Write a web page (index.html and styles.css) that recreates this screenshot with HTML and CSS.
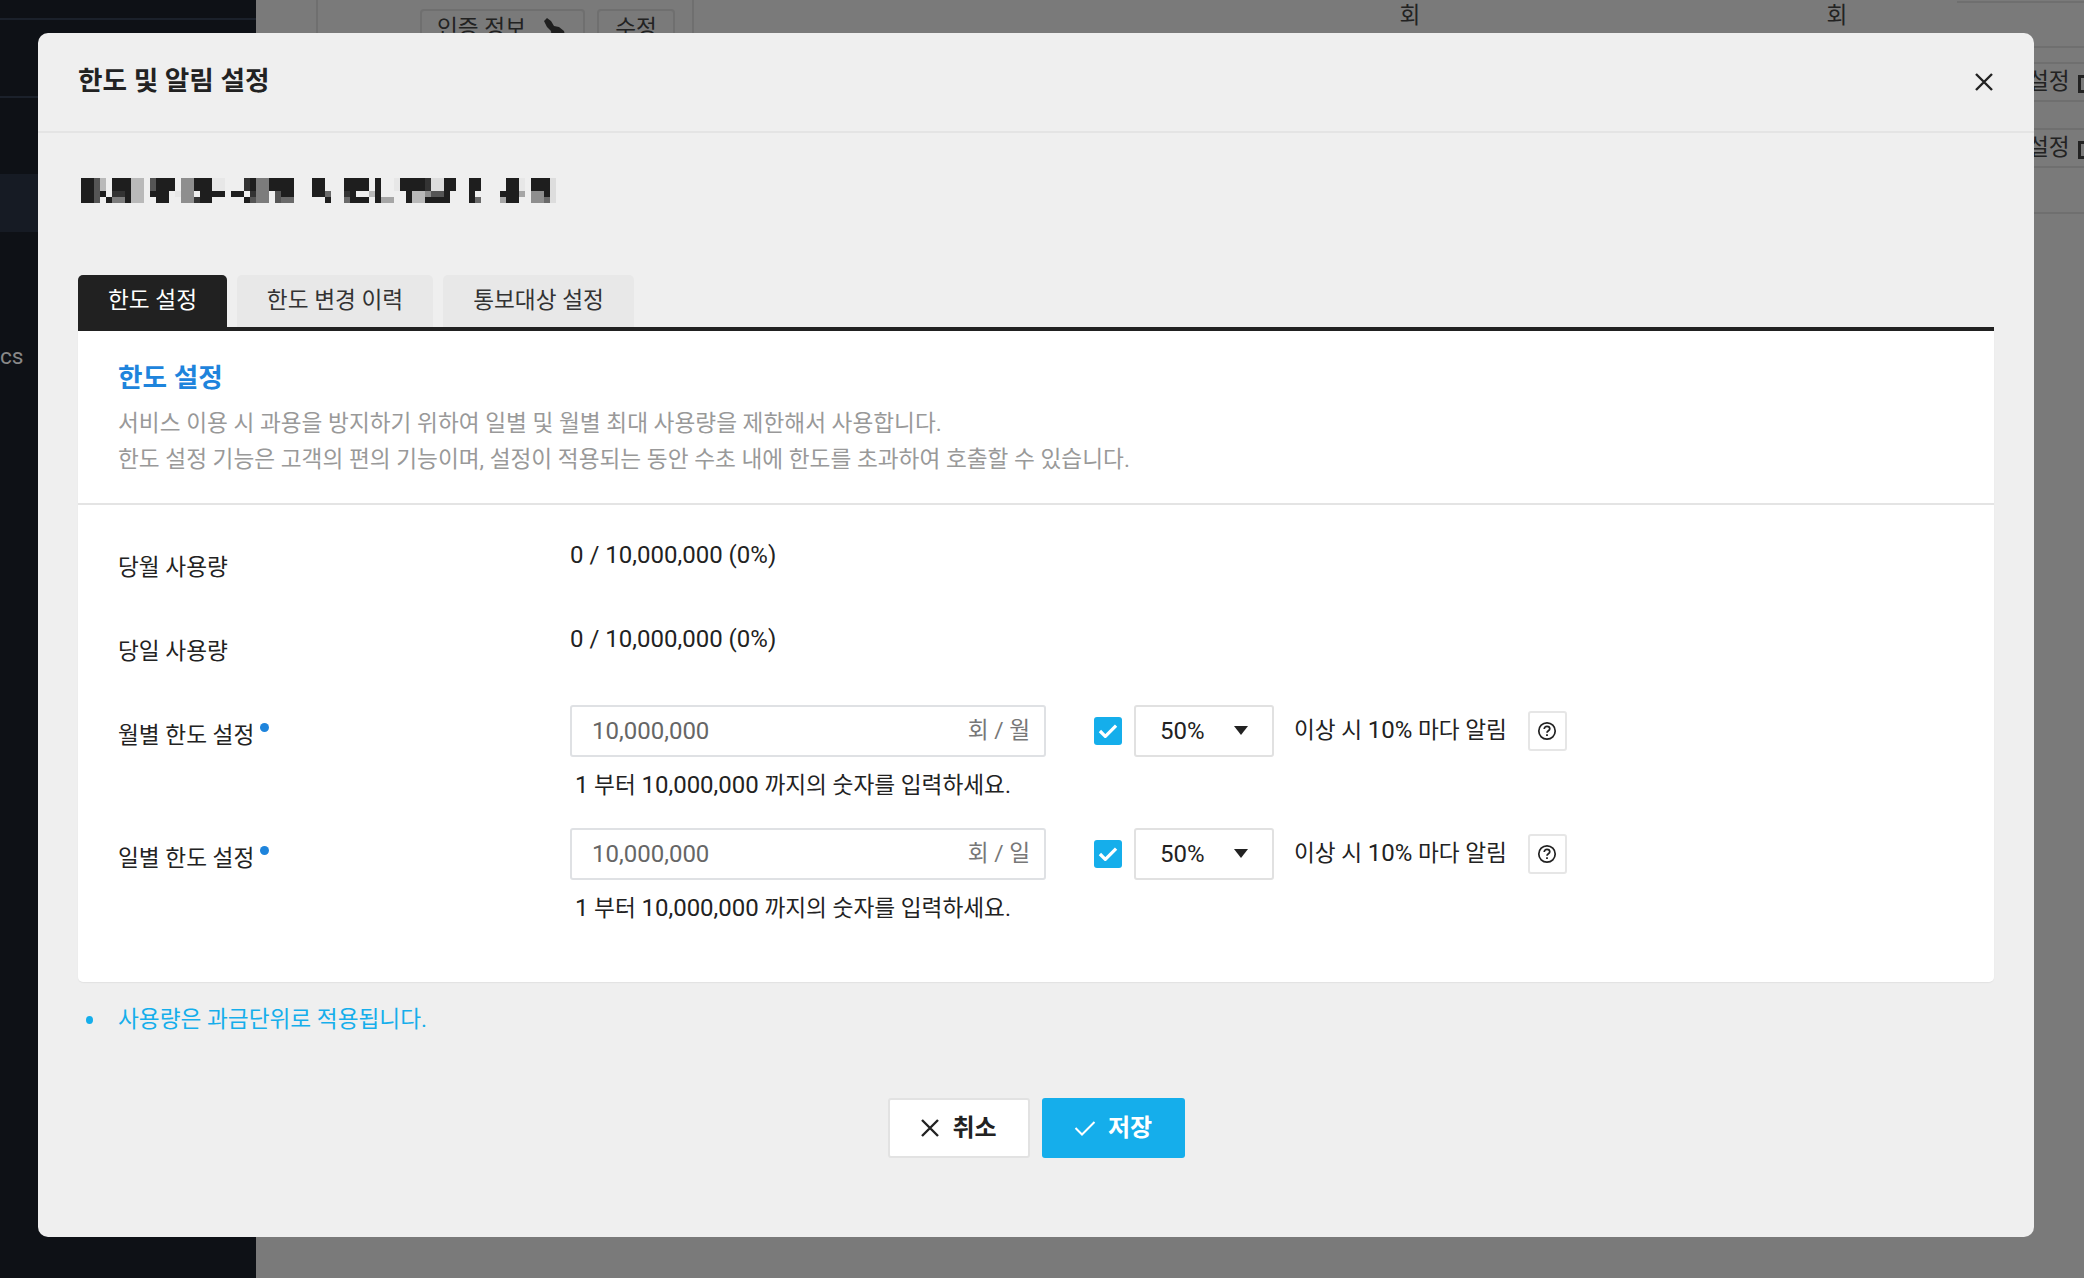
FILE: index.html
```html
<!DOCTYPE html>
<html lang="ko">
<head>
<meta charset="utf-8">
<title>한도 및 알림 설정</title>
<link rel="stylesheet" href="styles.css">
</head>
<body>
<div class="page">
  <aside class="sidebar">
    <div class="nav-line first"></div>
    <div class="nav-line second"></div>
    <div class="nav-active"></div>
    <div class="nav-text">cs</div>
  </aside>
  <main class="main">
    <div class="top-row">
      <div class="col-a"></div>
      <div class="col-b">
        <span class="bg-btn wide">인증 정보
          <svg class="bg-hand" viewBox="0 0 24 22" width="24" height="22"><path d="M1 3l3-3 4 3 3 5 5 1 5 4 2 9H9L8 13 4 9z" fill="#1f1f1f"/></svg>
        </span>
        <span class="bg-btn narrow">수정</span>
      </div>
      <div class="col-c">회</div>
      <div class="col-d">회</div>
      <div class="col-e"></div>
    </div>
    <div class="bg-gap"></div>
    <div class="bg-row"><span>설정</span><i class="bg-box"></i></div>
    <div class="bg-gap"></div>
    <div class="bg-row"><span>설정</span><i class="bg-box"></i></div>
    <div class="bg-end"></div>
  </main>
</div>

<section class="modal">
  <header class="modal-head">
    <h1 class="modal-title">한도 및 알림 설정</h1>
    <svg class="close" viewBox="0 0 18 18" width="18" height="18"><path d="M1 1l16 16M17 1L1 17" fill="none" stroke="#222" stroke-width="2.4"/></svg>
  </header>
  <div class="modal-body">
    <svg class="mosaic" viewBox="0 0 76 4" width="475" height="25.33" preserveAspectRatio="none" shape-rendering="crispEdges" role="img" aria-label="가려진 서비스 이름">
      <g fill="#1e1e1e">
        <rect x="0" y="0" width="2" height="4"/><rect x="3" y="2" width="1" height="1"/><rect x="4" y="3" width="1" height="1"/><rect x="5" y="0" width="2" height="2"/><rect x="7" y="0" width="1" height="4"/>
        <rect x="11" y="2" width="1" height="1"/><rect x="12" y="0" width="2" height="4"/><rect x="14" y="0" width="1" height="2"/><rect x="18" y="0" width="1" height="2"/><rect x="19" y="0" width="2" height="4"/>
        <rect x="21" y="2" width="2" height="1"/><rect x="24" y="2" width="2" height="1"/><rect x="26" y="3" width="1" height="1"/><rect x="27" y="0" width="1" height="2"/><rect x="30" y="0" width="4" height="2"/><rect x="32" y="2" width="2" height="1"/>
        <rect x="37" y="0" width="2" height="3"/><rect x="39" y="3" width="1" height="1"/><rect x="42" y="0" width="1" height="2"/><rect x="43" y="0" width="1" height="4"/><rect x="44" y="0" width="2" height="2"/><rect x="44" y="3" width="2" height="1"/><rect x="47" y="0" width="1" height="4"/>
        <rect x="51" y="0" width="4" height="2"/><rect x="52" y="2" width="1" height="2"/><rect x="55" y="3" width="3" height="1"/><rect x="58" y="0" width="1" height="4"/><rect x="59" y="0" width="1" height="2"/>
        <rect x="62" y="0" width="1" height="4"/><rect x="63" y="0" width="1" height="2"/><rect x="67" y="2" width="1" height="1"/><rect x="68" y="0" width="2" height="4"/><rect x="72" y="0" width="3" height="2"/><rect x="74" y="2" width="1" height="1"/>
      </g>
      <g fill="#333">
        <rect x="5" y="2" width="2" height="1"/><rect x="18" y="3" width="1" height="1"/><rect x="26" y="0" width="1" height="2"/><rect x="27" y="2" width="1" height="1"/><rect x="42" y="2" width="1" height="1"/><rect x="55" y="0" width="1" height="2"/>
      </g>
      <g fill="#555">
        <rect x="2" y="0" width="1" height="4"/><rect x="11" y="0" width="1" height="2"/><rect x="27" y="3" width="1" height="1"/><rect x="31" y="2" width="1" height="1"/><rect x="31" y="3" width="1" height="1"/><rect x="56" y="2" width="2" height="1"/>
      </g>
      <g fill="#6a6a6a">
        <rect x="32" y="3" width="2" height="1"/><rect x="39" y="2" width="1" height="1"/><rect x="42" y="3" width="1" height="1"/><rect x="63" y="3" width="1" height="1"/><rect x="74" y="3" width="1" height="1"/>
      </g>
      <g fill="#7c7c7c">
        <rect x="5" y="3" width="2" height="1"/><rect x="28" y="0" width="2" height="4"/>
      </g>
      <g fill="#8e8e8e">
        <rect x="16" y="0" width="2" height="4"/><rect x="55" y="2" width="1" height="1"/><rect x="72" y="2" width="2" height="2"/>
      </g>
      <g fill="#a6a6a6">
        <rect x="48" y="3" width="2" height="1"/><rect x="67" y="3" width="1" height="1"/><rect x="70" y="2" width="1" height="1"/>
      </g>
      <g fill="#b9b9b9">
        <rect x="8" y="0" width="2" height="4"/><rect x="46" y="2" width="1" height="1"/><rect x="53" y="2" width="2" height="2"/><rect x="3" y="0" width="1" height="2"/>
      </g>
      <g fill="#dddddd">
        <rect x="56" y="0" width="2" height="2"/><rect x="75" y="0" width="1" height="4"/>
      </g>
      <g fill="#e7e7e7">
        <rect x="15" y="2" width="1" height="1"/><rect x="21" y="0" width="2" height="2"/><rect x="50" y="0" width="1" height="2"/><rect x="70" y="0" width="1" height="2"/>
      </g>
    </svg>

    <nav class="tabs">
      <span class="tab on">한도 설정</span>
      <span class="tab">한도 변경 이력</span>
      <span class="tab">통보대상 설정</span>
    </nav>

    <div class="panel">
      <div class="panel-head">
        <h2 class="panel-title">한도 설정</h2>
        <p class="panel-desc">서비스 이용 시 과용을 방지하기 위하여 일별 및 월별 최대 사용량을 제한해서 사용합니다.<br>한도 설정 기능은 고객의 편의 기능이며, 설정이 적용되는 동안 수초 내에 한도를 초과하여 호출할 수 있습니다.</p>
      </div>
      <div class="form">
        <div class="row info">
          <div class="label">당월 사용량</div>
          <div class="value num">0 / 10,000,000 (0%)</div>
        </div>
        <div class="row info">
          <div class="label">당일 사용량</div>
          <div class="value num">0 / 10,000,000 (0%)</div>
        </div>
        <div class="row limit">
          <div class="label"><span class="req">월별 한도 설정</span></div>
          <div class="field">
            <div class="controls">
              <div class="input"><span class="num">10,000,000</span><span class="unit">회 / 월</span></div>
              <span class="check"><svg viewBox="0 0 18 13" width="20" height="14"><path d="M1.5 6.5l5 5 10-10" fill="none" stroke="#fff" stroke-width="3"/></svg></span>
              <div class="select"><span class="num">50%</span><i class="caret"></i></div>
              <span class="notify">이상 시 <span class="num">10%</span> 마다 알림</span>
              <span class="help"><svg viewBox="0 0 20 20" width="20" height="20"><circle cx="10" cy="10" r="8.2" fill="none" stroke="#222" stroke-width="1.7"/><path d="M7.2 8c0-1.7 1.2-2.7 2.8-2.7s2.8 1 2.8 2.5c0 2-2.8 2-2.8 4" fill="none" stroke="#222" stroke-width="1.7"/><path d="M9.1 13.2h1.8V15H9.1z" fill="#222"/></svg></span>
            </div>
            <div class="hint"><span class="num">1</span> 부터 <span class="num">10,000,000</span> 까지의 숫자를 입력하세요.</div>
          </div>
        </div>
        <div class="row limit">
          <div class="label"><span class="req">일별 한도 설정</span></div>
          <div class="field">
            <div class="controls">
              <div class="input"><span class="num">10,000,000</span><span class="unit">회 / 일</span></div>
              <span class="check"><svg viewBox="0 0 18 13" width="20" height="14"><path d="M1.5 6.5l5 5 10-10" fill="none" stroke="#fff" stroke-width="3"/></svg></span>
              <div class="select"><span class="num">50%</span><i class="caret"></i></div>
              <span class="notify">이상 시 <span class="num">10%</span> 마다 알림</span>
              <span class="help"><svg viewBox="0 0 20 20" width="20" height="20"><circle cx="10" cy="10" r="8.2" fill="none" stroke="#222" stroke-width="1.7"/><path d="M7.2 8c0-1.7 1.2-2.7 2.8-2.7s2.8 1 2.8 2.5c0 2-2.8 2-2.8 4" fill="none" stroke="#222" stroke-width="1.7"/><path d="M9.1 13.2h1.8V15H9.1z" fill="#222"/></svg></span>
            </div>
            <div class="hint"><span class="num">1</span> 부터 <span class="num">10,000,000</span> 까지의 숫자를 입력하세요.</div>
          </div>
        </div>
      </div>
    </div>

    <ul class="notes"><li>사용량은 과금단위로 적용됩니다.</li></ul>

    <div class="actions">
      <button class="btn cancel"><svg viewBox="0 0 20 20" width="20" height="20"><path d="M2 2l16 16M18 2L2 18" fill="none" stroke="#222" stroke-width="2.4"/></svg>취소</button>
      <button class="btn save"><svg viewBox="0 0 22 16" width="22" height="16"><path d="M1.5 8l6.5 6.5L20.5 2" fill="none" stroke="#fff" stroke-width="2"/></svg>저장</button>
    </div>
  </div>
</section>
</body>
</html>
```
FILE: styles.css
```css
* { box-sizing: border-box; }
html, body { margin: 0; height: 100%; }
body {
  font-family: Roboto, "Noto Sans CJK KR", sans-serif;
  font-size: 22.67px;
  line-height: 36px;
  color: #222;
  background: #7a7a7a;
  overflow: hidden;
}
h1, h2, p, ul { margin: 0; padding: 0; }
.num { font-size: 24px; }

/* dimmed page behind the dialog */
.page { display: flex; height: 1278px; }
.sidebar { width: 256px; flex: none; background: #0e1116; color: #888; overflow: hidden; }
.nav-line { height: 2px; background: #1b212b; }
.nav-line.first { margin-top: 18px; }
.nav-line.second { margin-top: 76px; }
.nav-active { height: 58px; margin-top: 76px; background: #161b24; }
.nav-text { margin-top: 107px; line-height: 36px; }

.main { flex: 1; min-width: 0; color: #222; }
.top-row { display: flex; height: 48px; border-bottom: 2px solid #6f6f6f; }
.col-a { width: 60px; flex: none; }
.col-b {
  width: 378px; flex: none; padding: 9px 0 0 102px;
  display: flex; gap: 12px; align-items: flex-start;
  border-left: 2px solid #6f6f6f; border-right: 2px solid #6f6f6f;
}
.bg-btn {
  display: flex; align-items: center; justify-content: center; gap: 17px;
  height: 44px; padding-bottom: 5px; border: 2px solid #6f6f6f; border-radius: 4px;
}
.bg-btn.wide { width: 165px; padding-right: 1px; }
.bg-btn.narrow { width: 78px; }
.bg-hand { flex: none; align-self: flex-start; margin-top: 7px; }
.col-c { width: 716px; flex: none; margin-left: 358px; text-align: center; line-height: 32px; }
.col-d { width: 138px; flex: none; text-align: center; line-height: 32px; }
.col-e { width: 200px; height: 3px; margin-left: 51px; border-bottom: 2px solid #6f6f6f; }
.bg-gap { height: 14px; }
.bg-row {
  height: 40px; padding-left: 1772px;
  display: flex; align-items: center; gap: 8px;
  border-top: 2px solid #6f6f6f; border-bottom: 2px solid #6f6f6f;
  white-space: nowrap; overflow: hidden;
}
.bg-row + .bg-gap { height: 26px; }
.bg-box { width: 22px; height: 18px; margin-top: 3px; border: 3px solid #222; flex: none; }
.bg-end { height: 46px; border-bottom: 2px solid #6f6f6f; }

/* dialog */
.modal {
  position: fixed; left: 38px; top: 33px;
  width: 1996px; height: 1204px;
  background: #efefef; border-radius: 10px;
}
.modal-head {
  height: 100px; padding: 0 40px 3px;
  display: flex; align-items: center; justify-content: space-between;
  border-bottom: 2px solid #e4e4e4;
}
.modal-title { font-size: 26.67px; font-weight: 700; line-height: 36px; }
.close { margin: 2px 1px 0 0; }
.modal-body { padding: 45px 40px 0; }
.mosaic { display: block; margin: 0 0 71.67px 3px; }

.tabs { display: flex; gap: 10px; height: 52px; }
.tab {
  width: 191px; display: flex; align-items: center; justify-content: center;
  background: #e8e8e8; border-radius: 5px 5px 0 0; color: #333;
}
.tab.on { width: 149px; background: #212121; color: #fff; }
.tab:nth-child(2) { width: 196px; }

.panel {
  height: 655px; background: #fff;
  border-top: 4px solid #212121; border-radius: 0 0 5px 5px;
  box-shadow: 0 1px 1px #e2e2e2;
}
.panel-head { height: 174px; padding: 29px 40px 0; border-bottom: 2px solid #e4e4e4; }
.panel-title { font-size: 26.67px; font-weight: 700; line-height: 36px; color: #1e84dc; }
.panel-desc { margin-top: 10px; color: #999; }

.form { padding: 32px 40px 0; }
.row { display: flex; }
.row.info { height: 84px; }
.row.limit { margin-bottom: 24px; }
.label { width: 452px; flex: none; padding-top: 13px; }
.req { position: relative; }
.req::after {
  content: ""; position: absolute; right: -15px; top: 1px;
  width: 9px; height: 9px; border-radius: 50%; background: #1e84dc;
}
.controls { display: flex; align-items: center; height: 52px; }
.input {
  width: 476px; height: 52px; padding: 0 14px 0 20px;
  display: flex; align-items: center; justify-content: space-between;
  background: #fff; border: 2px solid #dfe1e4; border-radius: 3px; color: #666;
}
.unit { color: #777; }
.check {
  width: 28px; height: 28px; margin-left: 48px;
  display: flex; align-items: center; justify-content: center;
  background: #15aeeb; border-radius: 3px;
}
.select {
  width: 140px; height: 52px; margin-left: 12px; padding: 0 24px;
  display: flex; align-items: center; justify-content: space-between;
  border: 2px solid #e1e1e1; border-radius: 3px;
}
.caret {
  width: 0; height: 0;
  border-left: 7px solid transparent; border-right: 7px solid transparent; border-top: 9px solid #222;
}
.notify { margin-left: 20px; }
.help {
  width: 39px; height: 40px; margin-left: 21px;
  display: flex; align-items: center; justify-content: center;
  border: 2px solid #e6e6e6; border-radius: 3px;
}
.hint { margin-top: 10px; padding-left: 5px; }

.notes {
  list-style: none; margin-top: 20px; padding-left: 40px;
  color: #15aeeb; position: relative;
}
.notes li::before {
  content: ""; position: absolute; left: 8px; top: 14px;
  width: 7px; height: 8px; border-radius: 50%; background: #15aeeb;
}
.actions { display: flex; justify-content: center; gap: 12px; margin-top: 60px; }
.btn {
  height: 60px; display: flex; align-items: center; justify-content: center; gap: 12px;
  font: 700 24px/1 Roboto, "Noto Sans CJK KR", sans-serif;
  border-radius: 3px; padding: 0;
}
.btn.cancel { width: 142px; background: #fff; border: 2px solid #e2e2e2; color: #222; }
.btn.save { width: 143px; background: #15aeeb; border: 0; color: #fff; }
```
